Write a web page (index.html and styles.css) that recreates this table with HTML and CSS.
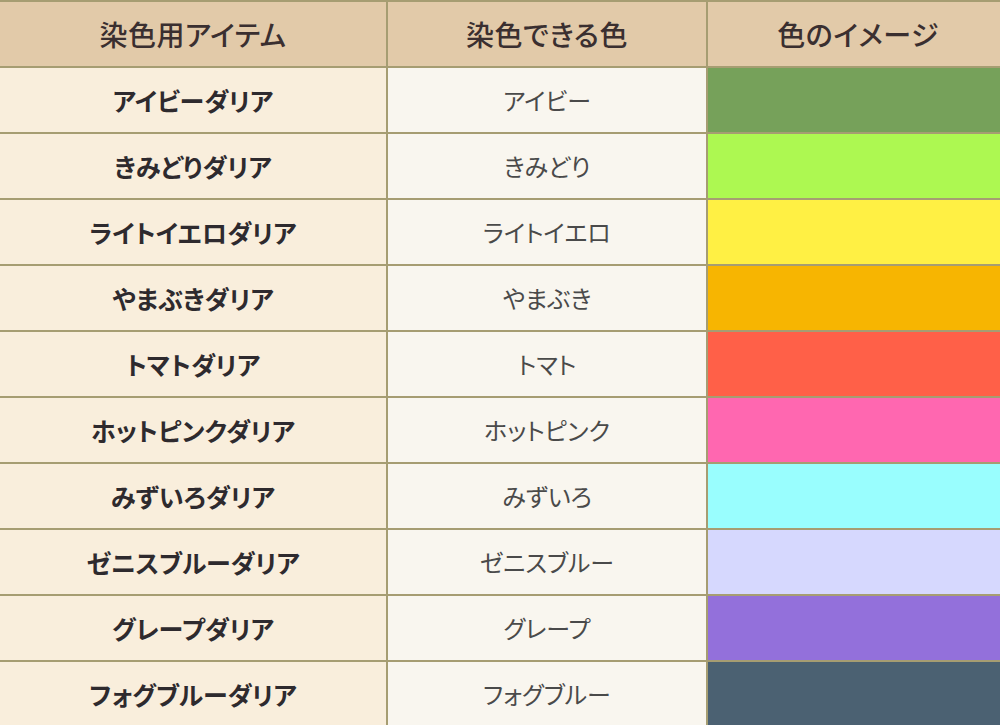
FILE: index.html
```html
<!DOCTYPE html>
<html lang="ja">
<head>
<meta charset="utf-8">
<title>染色用アイテム</title>
<link rel="stylesheet" href="styles.css">
</head>
<body>
<table class="dye-table">
  <colgroup>
    <col class="col-item">
    <col class="col-name">
    <col class="col-swatch">
  </colgroup>
  <thead>
    <tr>
      <th>染色用アイテム</th>
      <th>染色できる色</th>
      <th>色のイメージ</th>
    </tr>
  </thead>
  <tbody>
    <tr><td class="item">アイビーダリア</td><td class="name">アイビー</td><td class="swatch" style="background:#76a15a"></td></tr>
    <tr><td class="item">きみどりダリア</td><td class="name">きみどり</td><td class="swatch" style="background:#adf851"></td></tr>
    <tr><td class="item">ライトイエロダリア</td><td class="name">ライトイエロ</td><td class="swatch" style="background:#fff044"></td></tr>
    <tr><td class="item">やまぶきダリア</td><td class="name">やまぶき</td><td class="swatch" style="background:#f7b501"></td></tr>
    <tr><td class="item">トマトダリア</td><td class="name">トマト</td><td class="swatch" style="background:#ff6048"></td></tr>
    <tr><td class="item">ホットピンクダリア</td><td class="name">ホットピンク</td><td class="swatch" style="background:#ff67b0"></td></tr>
    <tr><td class="item">みずいろダリア</td><td class="name">みずいろ</td><td class="swatch" style="background:#99fefe"></td></tr>
    <tr><td class="item">ゼニスブルーダリア</td><td class="name">ゼニスブルー</td><td class="swatch" style="background:#d6d8fe"></td></tr>
    <tr><td class="item">グレープダリア</td><td class="name">グレープ</td><td class="swatch" style="background:#9370db"></td></tr>
    <tr><td class="item">フォグブルーダリア</td><td class="name">フォグブルー</td><td class="swatch" style="background:#4b6172"></td></tr>
  </tbody>
</table>
</body>
</html>
```

FILE: styles.css
```css
html, body {
  margin: 0;
  padding: 0;
  background: #f9f6ef;
  overflow: hidden;
}

.dye-table {
  border-collapse: collapse;
  table-layout: fixed;
  width: 1010px;
  margin-left: -2px;
  font-family: "Noto Sans CJK JP", "Noto Sans", sans-serif;
  font-feature-settings: "palt";
}

.col-item { width: 388px; }
.col-name { width: 320px; }
.col-swatch { width: 302px; }

.dye-table th,
.dye-table td {
  border: 2px solid #a69d72;
  padding: 0;
  height: 64px;
  text-align: center;
  vertical-align: middle;
  line-height: 1;
}

.dye-table th {
  background: #e2caa9;
  color: #3a2f30;
  font-size: 28px;
  font-weight: 500;
  letter-spacing: 0.5px;
}

.dye-table td.item {
  background: #f9eedc;
  color: #2e2a2e;
  font-size: 25px;
  font-weight: 700;
}

.dye-table td.name {
  background: #f9f6ef;
  color: #4a4a4a;
  font-size: 24px;
  font-weight: 400;
}
```
